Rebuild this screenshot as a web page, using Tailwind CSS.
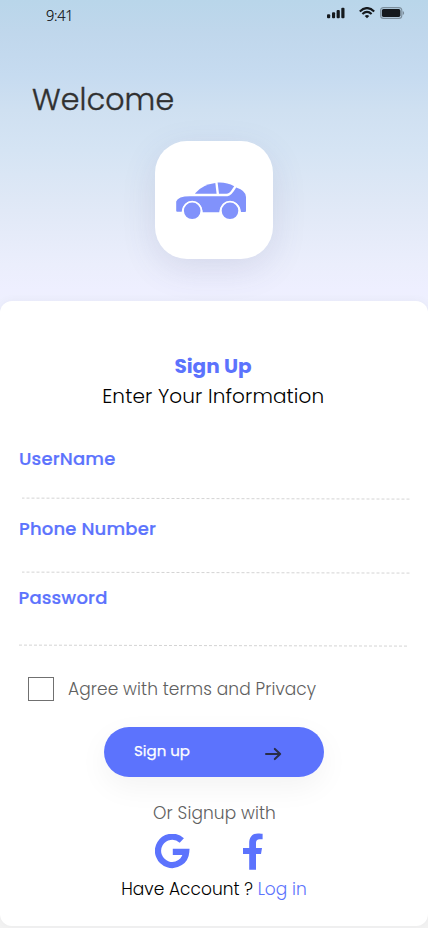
<!DOCTYPE html>
<html lang="en">
<head>
<meta charset="utf-8">
<title>Sign Up</title>
<script src="https://cdn.jsdelivr.net/npm/@tailwindcss/browser@4"></script>
</head>
<body class="bg-[#f3f3f3] font-['Poppins','Inter',sans-serif] w-[428px] h-[928px] overflow-hidden">
<div class="h-[928px] flex flex-col bg-[linear-gradient(to_bottom,#b9d6ea_0px,#c0d7ec_34px,#c6dbf0_75px,#cfe0f1_110px,#d5e4f4_150px,#dfe8f6_200px,#ebeefc_265px,#eeefff_290px,#eef0fe_305px,#f3f3f3_330px)]">
  <header class="h-[301px] shrink-0 flex flex-col">
    <div class="h-7 flex justify-between pl-[46px] pr-[24px]">
      <span class="font-['Open_Sans'] font-light text-[14.5px] leading-5 pt-[6px] tracking-[-0.25px] text-black [-webkit-text-stroke:0.15px_black]">9:41</span>
      <div class="flex pt-[7px] text-[#15191d]">
        <svg class="w-[18px] h-[12px]" viewBox="0 0 18 12" fill="currentColor"><rect x="0" y="7.3" width="3.2" height="4" rx="1"/><rect x="5" y="5.3" width="3.1" height="6" rx="1"/><rect x="9.6" y="3" width="3.2" height="8.3" rx="1"/><rect x="14.3" y=".7" width="3.2" height="10.6" rx="1"/></svg>
        <svg class="w-[16px] h-[12px] ml-[14px]" viewBox="0 0 16 12" fill="none" stroke="currentColor" stroke-width="2.1"><path d="M.8 4.4Q8-2.3 15.2 4.4"/><path d="M3.4 7.1Q8 2.8 12.6 7.1"/><path d="M8 11.2 5.7 8.9Q8 7.1 10.3 8.9Z" fill="currentColor" stroke="none"/></svg>
        <svg class="w-[25px] h-[12px] ml-[5px] -mr-px" viewBox="0 0 25 12"><rect x=".6" y=".6" width="21.2" height="10.8" rx="3" fill="none" stroke="#15191d" stroke-opacity=".38" stroke-width="1.1"/><rect x="1.8" y="2.1" width="18.6" height="7.8" rx="1.7" fill="#15191d"/><path d="M22.8 4q1.3.5 1.3 2t-1.3 2z" fill="#15191d" opacity=".42"/></svg>
      </div>
    </div>
    <h1 class="mt-[52px] ml-[32px] h-10 leading-10 text-[30px] font-light tracking-[0.15px] text-[#303030] [-webkit-text-stroke:0.4px_#303030]">Welcome</h1>
    <div class="mt-[21.4px] self-center w-[118px] h-[118px] rounded-[32px] bg-white shadow-[0_10px_34px_rgba(80,80,130,0.13)] pt-[39.6px] pl-[20px]">
      <svg class="w-[74px] h-[42px]" viewBox="0 0 74 42">
        <g fill="#8192fb">
          <path d="M1.2 29.7V20.5Q3 15.4 15 15.3H52.5Q56.5 14.5 61.2 6.4Q71 9.5 71 16V30Q71 31 70 31H66C65.5 24.5 61 20.2 55.2 20.2S45 24.8 44.2 31.2H27.8C27 24.5 23 20.2 17.2 20.2S7.5 24.6 6.7 30.7H2.2Q1.2 30.7 1.2 29.7Z"/>
          <path d="M20.2 12.2Q27.5 3.3 40.3 1.9L41.6 12.7H20.2Z"/>
          <path d="M42.6 1.6Q51.5 1 59.2 5.2C56.8 8.2 55.2 12.7 51.5 12.7H44Z"/>
        </g>
        <g fill="#8192fb" stroke="#fff" stroke-width="1.8"><circle cx="17.2" cy="29.8" r="9.2"/><circle cx="55" cy="29.8" r="9.2"/></g>
      </svg>
    </div>
  </header>

  <main class="h-[625px] shrink-0 rounded-[12px] bg-white shadow-[0_0_8px_rgba(90,90,110,0.06)] flex flex-col">
    <h2 class="mt-[50px] h-[30px] leading-[30px] text-center text-[20px] font-bold text-[#5c73fd] pr-[2px]">Sign Up</h2>
    <p class="h-[30px] leading-[30px] text-center text-[20px] font-light tracking-[0.12px] text-black pr-[1.5px]">Enter Your Information</p>

    <form class="flex flex-col">
      <div class="mt-[36px] h-[70px] pl-[19px] flex flex-col">
        <label class="h-6 leading-6 text-[18px] font-medium tracking-[0.18px] text-[#5c73fd] [-webkit-text-stroke:0.2px_#5c73fd]"><span>UserName</span></label>
        <svg class="mt-[26px] ml-[3px] w-[388px] h-[3px] shrink-0" viewBox="0 0 388 3"><path d="M-.5 1.1 387.5 2.1" stroke="#d4d4d4" stroke-dasharray="3 2"/></svg>
      </div>
      <div class="h-[69px] pl-[19px] flex flex-col">
        <label class="h-6 leading-6 text-[18px] font-medium tracking-[0.18px] text-[#5c73fd] [-webkit-text-stroke:0.2px_#5c73fd]"><span>Phone Number</span></label>
        <svg class="mt-[30px] ml-[3px] w-[388px] h-[3px] shrink-0" viewBox="0 0 388 3"><path d="M-.5 1.1 387.5 2.1" stroke="#d4d4d4" stroke-dasharray="3 2"/></svg>
      </div>
      <div class="h-[91px] pl-[18.5px] flex flex-col">
        <label class="h-6 leading-6 text-[18px] font-medium tracking-[0.18px] text-[#5c73fd] [-webkit-text-stroke:0.2px_#5c73fd]"><span>Password</span></label>
        <svg class="mt-[34px] w-[388px] h-[3px] shrink-0" viewBox="0 0 388 3"><path d="M0 1.1 388 2.1" stroke="#d4d4d4" stroke-dasharray="3 2"/></svg>
      </div>
      <label class="h-6 pl-[28px] flex items-center gap-[14px]">
        <span class="w-[26px] h-6 border border-[#707070] bg-white"></span>
        <span class="text-[17px] leading-6 font-light tracking-[0.09px] text-[#606060]">Agree with terms and Privacy</span>
      </label>
      <button type="button" class="mt-[26px] self-center w-[220px] h-[49.5px] rounded-full bg-[#5c73fd] shadow-[0_10px_30px_rgba(0,0,0,0.05)] flex items-center justify-between pl-[30px] pr-[42px]">
        <span class="text-[15px] leading-6 font-normal text-white [-webkit-text-stroke:0.25px_white] -mt-[2px]">Sign up</span>
        <svg class="w-[17px] h-[14px] mt-[4px]" viewBox="0 0 17 14" fill="none" stroke="#292d48" stroke-width="2" stroke-linecap="round" stroke-linejoin="round"><path d="M1 7H15.2M9.8 1.9 15.2 7 9.8 12.1"/></svg>
      </button>
    </form>

    <p class="mt-[24.5px] h-6 leading-6 text-center text-[17px] font-light tracking-[0.09px] text-[#606060] pl-px">Or Signup with</p>
    <div class="mt-[8px] h-[38px] pl-[155px] flex gap-[53px] text-[#5c73fd]">
      <svg class="w-[35px] h-[36px] mt-px" viewBox="0 0 35 36" fill="none" stroke="currentColor" stroke-width="6.2"><path d="M26.8 6.6A14.1 14.1 0 1 0 31.2 17.9H17.8"/></svg>
      <svg class="w-[21px] h-[37px]" viewBox="0 0 21 37" fill="currentColor"><path d="M6.2 36.7V21H0V14.9H6.2V10.3C6.2 4.2 9.5.4 15 .4C17 .4 19.6.8 19.6.8V6.2H16.8C14 6.2 13 7.8 13 9.8V14.9H19L18 21H13V36.7Z"/></svg>
    </div>
    <p class="mt-[6px] h-6 leading-6 text-center text-[17px] font-light tracking-[0.03px] text-black">Have Account ? <a class="text-[#5c73fd]">Log in</a></p>
  </main>
</div>
</body>
</html>
